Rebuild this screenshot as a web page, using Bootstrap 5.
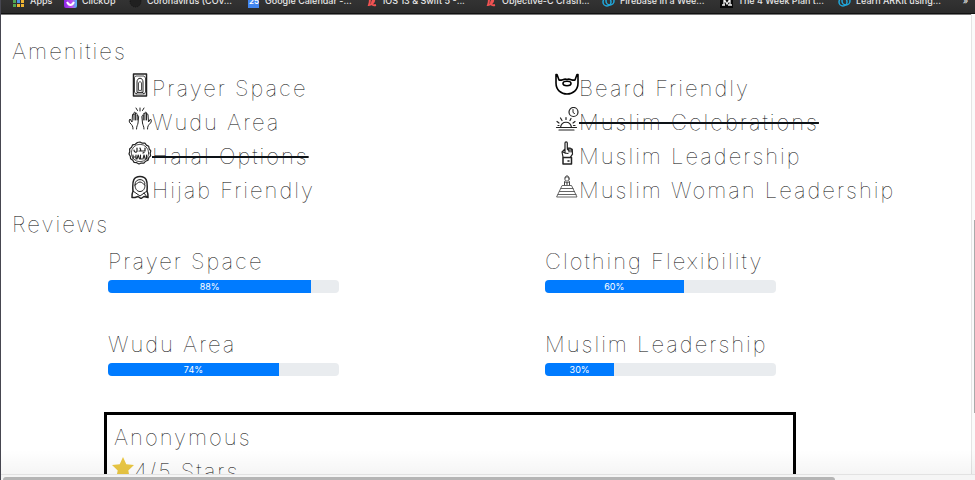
<!DOCTYPE html>
<html lang="en">
<head>
<meta charset="utf-8">
<meta name="viewport" content="width=device-width, initial-scale=1">
<title>Amenities and Reviews</title>
<link href="https://cdn.jsdelivr.net/npm/bootstrap@5.3.0/dist/css/bootstrap.min.css" rel="stylesheet">
<style>
body{font-family:Inter,"Liberation Sans",sans-serif;color:#000;border-left:1px solid #464650;background:#fff}
.bookmarks{height:14px;flex:none;display:grid;grid-template-columns:52px 65px repeat(2,118px) 119px repeat(4,118px) auto;align-content:end;padding:0 0 4px 11px;background:linear-gradient(#333,#2b2b2b);border-bottom:1px solid #111;overflow:hidden;box-shadow:0 1px #777}
.bookmarks a{color:#e6e6e6;font-size:9px;font-weight:500;line-height:16px;text-decoration:none;white-space:nowrap;display:flex;align-items:center;gap:5px}
.bookmarks svg{width:13px;height:14px;flex:none}
.page{letter-spacing:2px;font-weight:100;font-size:22px;line-height:34px}
.page h2,.page h3{font-size:22px;line-height:34px;font-weight:100;margin:0}
.page h2{padding-left:11px}
.amenities{display:grid;grid-template-columns:427fr 416fr;padding-left:127px;margin:3px 0 0}
.amenities li{display:flex;white-space:nowrap}
.amenities svg{width:24px;height:24px;flex:none;margin-top:2px;fill:none;stroke:#222;stroke-linecap:round;stroke-linejoin:round}
.amenities del{text-decoration:line-through 2px #0d1217}
.ratings{display:grid;grid-template-columns:437fr 426fr;row-gap:34px;padding:3px 0 0 107px}
.ratings .progress{width:231px;height:13px;border-radius:4px;background:#e9ecef;margin-top:2px}
.ratings .progress-bar{background:#007bff;font-size:9px;font-weight:400;letter-spacing:0;line-height:13px}
.review{margin:36px 175px 0 103px;border:3px solid #000;padding:5px 6px}
.review h3{padding-left:1px}
.stars{display:flex}
.stars svg{width:22px;height:22px;margin:3px 0 0 -1px}
.fade-low{height:24px;bottom:0;background:linear-gradient(transparent,#0000000a)}
.vscroll{width:4px;flex:none;border-left:1px solid #e4e4e4;background:#fafafa;display:flex;flex-direction:column;align-items:end}
.vscroll span{width:1px;margin-top:206px;height:193px;background:#aaa}
.hscroll{height:6px;flex:none;border-top:1px solid #e2e2e2;background:#f5f5f5;padding:2px 14.4% 0 2px}
.hscroll span{display:block;height:3px;background:#b5b5b5;border-radius:3px 3px 0 0}
</style>
<script src="https://cdn.jsdelivr.net/npm/bootstrap@5.3.0/dist/js/bootstrap.bundle.min.js"></script>
</head>
<body class="vh-100 d-flex flex-column overflow-hidden">
<nav class="bookmarks" aria-label="Bookmarks">
<a href="#"><svg viewBox="0 0 13 14"><g fill="#52a852"><path d="M1 1h3v3H1zM1 6h3v3H1zM1 10h3v3H1z"/></g><path fill="#e95e4d" d="M5 1h3v3H5zM9 1h3v3H9z"/><path fill="#4f93e6" d="M5 6h3v3H5z"/><path fill="#efb532" d="M9 6h3v3H9zM5 10h3v3H5zM9 10h3v3H9z"/></svg>Apps</a>
<a href="#"><svg viewBox="0 0 13 14"><defs><linearGradient id="cu"><stop stop-color="#8a25e8"/><stop offset=".6" stop-color="#c14ef0"/><stop offset="1" stop-color="#49b9f5"/></linearGradient></defs><rect width="13" height="14" rx="2" fill="url(#cu)"/><path d="M3 8c2 4 5 4 7 0" stroke="#fff" stroke-width="2" fill="none"/></svg>ClickUp</a>
<a href="#"><svg viewBox="0 0 13 14"><circle cx="6.500" cy="7.500" r="5.500" fill="#202020" stroke="#171717" stroke-dasharray="1 1"/></svg>Coronavirus (COV...</a>
<a href="#"><svg viewBox="0 0 13 14"><path fill="#4385ee" d="M1 0h11v14H1z"/><text x="2" y="10" font-size="8" font-weight="600" fill="#fff">25</text></svg>Google Calendar -...</a>
<a href="#"><svg viewBox="0 0 13 14"><path d="M2 5c4-2 3 3 2 6 3 0 6-3 5-7M8 6c-2 4-1 6 3 5" stroke="#f05252" stroke-width="2" fill="none"/></svg>iOS 13 &amp; Swift 5 -...</a>
<a href="#"><svg viewBox="0 0 13 14"><path d="M2 5c4-2 3 3 2 6 3 0 6-3 5-7M8 6c-2 4-1 6 3 5" stroke="#f05252" stroke-width="2" fill="none"/></svg>Objective-C Crash...</a>
<a href="#"><svg viewBox="0 0 13 14"><g stroke="#20a8dc" stroke-width="1.500" fill="none"><circle cx="5" cy="8" r="4"/><circle cx="8" cy="7" r="4"/></g></svg>Firebase in a Wee...</a>
<a href="#"><svg viewBox="0 0 13 14"><path fill="#090909" d="M0 0h13v14H0z"/><path d="M2 11h3M4 11V5l3 5 3-5v6M8 11h4" stroke="#eee" stroke-width="1.300" fill="none"/></svg>The 4 Week Plan t...</a>
<a href="#"><svg viewBox="0 0 13 14"><g stroke="#20a8dc" stroke-width="1.500" fill="none"><circle cx="5" cy="8" r="4"/><circle cx="8" cy="7" r="4"/></g></svg>Learn ARKit using...</a>
<a href="#" class="justify-content-center">»</a>
</nav>
<div class="d-flex flex-grow-1 overflow-hidden position-relative">
<main class="page flex-grow-1 overflow-hidden pt-3">
<section class="pt-1">
<h2>Amenities</h2>
<div class="amenities">
<ul class="list-unstyled m-0">
<li><svg viewBox="0 0 24 24"><path d="M5.500 1h13v22h-13z" stroke-width="1.500"/><path d="M8 3h8l1.500 2v14L16 21H8l-1.500-2V5z" stroke-width=".8"/><path d="M9 19V9c0-5 6-5 6 0v10z"/><path d="M10.500 17v-6c-.5-3 3.500-3 3 0v6zM8 21l2-2M16 21l-2-2" stroke-width=".8"/></svg>Prayer Space</li>
<li><svg viewBox="0 0 24 24"><path id="hand" d="M5 22c0-3-1-4-3-6-1-1-1-3 0-4l2 3 .5-7C4.500 6.500 6 6.500 6 8V6c0-1.200 1.500-1 1.500 0v1c0-1 1.700-1 1.700.3V9c1-1 1.500 0 1.400 1l-.6 6c-.2 2-1.500 3-1.500 6M6 8v5M7.600 7v6M9.200 9v4"/><use href="#hand" transform="matrix(-1 0 0 1 24.500 0)"/><path d="M12 1v3M8 1l1.500 2.500M16 1l-1.500 2.500"/></svg>Wudu Area</li>
<li><svg viewBox="0 0 24 24"><path d="M12 1l2.300 1.200 2.600-.1 1.500 2 2.300 1.200.5 2.500 1.600 2-.6 2.500.4 2.600-1.800 1.800-.8 2.500-2.400 1-1.700 1.900-2.600-.1L11 23l-2.300-1.300-2.600-.3-1.300-2.200-2.200-1.400-.3-2.600L1 13l.8-2.500-.2-2.600 2-1.700 1-2.400 2.600-.5L9.400 1.500z" stroke-width="1.200"/><circle cx="12" cy="12" r="8.700" stroke-width=".8"/><path d="M17 7v3h-3M12 7l1 3h-2M9 7v3.500C8 12 6 11 6 9M15 12l1-.5" stroke-width="1.200"/><path d="M5 14v4M8 14v4M5 16h3M9 18l1.200-4 1.300 4M12.500 14v4H14M15 18l1-4 1.300 4M18.500 14v4h1" stroke-width="1.100"/></svg><del>Halal Options</del></li>
<li><svg viewBox="0 0 24 24"><path d="M5 16C4 5 6 1.500 12 1.500S20 5 19 16M5 16c-1 2-1 4-1 6.500h3l3-1 3 2 3-2 4 1c0-3 0-4.500-1-6.500" stroke-width="1.500"/><path d="M7 10c2-1 3-3 5-3s3 2 5 3c0 4-2 6.500-5 6.500S7 14 7 10zM7 9c0-6 10-6 10 0M5 16l7 5 7-5M16 18l3 4"/></svg>Hijab Friendly</li>
</ul>
<ul class="list-unstyled m-0">
<li><svg viewBox="0 0 24 24"><path d="M1 1.500L1 10c0 7 5 11 11 11s11-4 11-11l0-8.500h-1L20 7c-3 1-5-2-8-.5C9 5 7 8 4 7L2 1.500z" stroke="#000" stroke-width="1.600"/><ellipse cx="12" cy="10.500" rx="4" ry="2.200" stroke="#000" stroke-width="1.600"/></svg>Beard Friendly</li>
<li><svg viewBox="0 0 24 24"><circle cx="18.500" cy="5" r="4.500" stroke-width="1.200"/><path d="M18 2.500v3l1.500 1" /><path d="M5.500 20.500c1-7 10-7 11 0zM1.500 20.500h20M4 23h15" stroke-width="1.200"/><path d="M11 12.500v-2M7 13.500l-1.500-2.500M15 13.500l1-2M4 16l-2-1.500M18 16l2-1.500M4 18.500H3M18.500 18.500H20" stroke-width="1.200"/></svg><del>Muslim Celebrations</del></li>
<li><svg viewBox="0 0 24 24"><path d="M8 16l-1-5 3-3V2c0-1.600 2.300-1.600 2.300 0v5l3 .2 2 1 .2 5-2 3M10 8v4l3 .5M12.300 8l2 2M14 7v4M16 8v3M10 12l-2-1" stroke-width="1.200"/><path d="M8 16.500h8.500V23H8zM13 20h1" stroke-width="1.500"/></svg>Muslim Leadership</li>
<li><svg viewBox="0 0 24 24"><path d="M7.500 10.500h9L22 22H2zM6 13.500h12M4.500 16.500h15M3 19.500h18" stroke="#555" stroke-width=".9"/><circle cx="12" cy="4" r="2.200" stroke="#555"/><path d="M9.500 10V6.500L12 8l2.500-1.500V10M12 8v2M10 3c0-3 4-3 4 0" stroke="#444"/></svg>Muslim Woman Leadership</li>
</ul>
</div>
</section>
<section>
<h2>Reviews</h2>
<div class="ratings">
<div><h3 id="r1">Prayer Space</h3><div class="progress" role="progressbar" aria-labelledby="r1" aria-valuenow="88" aria-valuemin="0" aria-valuemax="100"><div class="progress-bar" style="width:88%">88%</div></div></div>
<div><h3 id="r2">Clothing Flexibility</h3><div class="progress" role="progressbar" aria-labelledby="r2" aria-valuenow="60" aria-valuemin="0" aria-valuemax="100"><div class="progress-bar" style="width:60%">60%</div></div></div>
<div><h3 id="r3">Wudu Area</h3><div class="progress" role="progressbar" aria-labelledby="r3" aria-valuenow="74" aria-valuemin="0" aria-valuemax="100"><div class="progress-bar" style="width:74%">74%</div></div></div>
<div><h3 id="r4">Muslim Leadership</h3><div class="progress" role="progressbar" aria-labelledby="r4" aria-valuenow="30" aria-valuemin="0" aria-valuemax="100"><div class="progress-bar" style="width:30%">30%</div></div></div>
</div>
<article class="review">
<h3>Anonymous</h3>
<div class="stars"><svg viewBox="0 0 22 22"><path fill="#ebc844" d="M11 0l3.300 7.200 7.700.9-5.700 5.300 1.500 7.800L11 17.400l-6.800 3.800 1.500-7.800L0 8.100l7.700-.9z"/></svg>4/5 Stars</div>
</article>
</section>
</main>
<div class="vscroll" aria-hidden="true"><span></span></div>
<div class="fade-low position-absolute start-0 end-0"></div>
</div>
<div class="hscroll" aria-hidden="true"><span></span></div>
</body>
</html>
